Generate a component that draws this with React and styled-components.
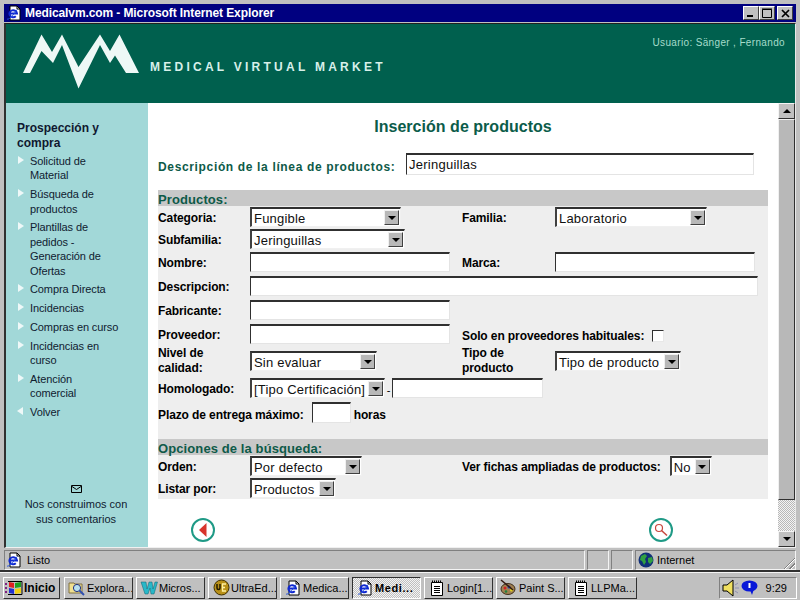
import styled, { createGlobalStyle } from "styled-components";

const GlobalStyle = createGlobalStyle`
  html, body {
    margin: 0;
    padding: 0;
    background: #c0c0c0;
  }
  * {
    box-sizing: border-box;
  }
`;

const menuItems = [
  { text: ["Solicitud de", "Material"] },
  { text: ["Búsqueda de", "productos"] },
  { text: ["Plantillas de", "pedidos -", "Generación de", "Ofertas"] },
  { text: ["Compra Directa"] },
  { text: ["Incidencias"] },
  { text: ["Compras en curso"] },
  { text: ["Incidencias en", "curso"] },
  { text: ["Atención", "comercial"] },
  { text: ["Volver"], back: true },
];

function IeIcon({ size = 16 }) {
  return (
    <svg width={size} height={size} viewBox="0 0 16 16">
      <path d="M4 1h7l3 3v11H4z" fill="#fff" stroke="#000" />
      <path d="M11 1v3h3" fill="none" stroke="#000" />
      <path d="M3.5 8.500h7.500a3.800 3.500 0 1 0-1.200 2.800" fill="none" stroke="#1028d0" strokeWidth="2" />
      <path d="M1 14c1.500 1 6-3 10-9.500" fill="none" stroke="#2050e0" strokeWidth="1" />
    </svg>
  );
}

function NotepadIcon() {
  return (
    <svg width="16" height="16" viewBox="0 0 16 16">
      <path d="M2.500 2.500h11v13h-11z" fill="#fff" stroke="#000" />
      <path d="M3 1.500h10" stroke="#000" strokeDasharray="1 1" strokeWidth="2" />
      <path d="M5 6.500h6M5 8.500h6M5 10.500h6M5 12.500h6" stroke="#000" />
    </svg>
  );
}

function FolderIcon() {
  return (
    <svg width="18" height="16" viewBox="0 0 18 16">
      <path d="M1 3h5l1 1h7v9H1z" fill="#f0e090" stroke="#807040" />
      <circle cx="9" cy="8" r="3.600" fill="#b8e0f0" stroke="#203080" />
      <path d="M11.500 10.500L16 15" stroke="#3050b0" strokeWidth="2" />
    </svg>
  );
}

function WordIcon() {
  return (
    <svg width="18" height="16" viewBox="0 0 18 16">
      <path
        d="M1 2h5l1 7 2-7h3l1 7 2-7h2.500l-3.500 12h-3l-1-6-2 6H5z"
        fill="#28b8c8"
        stroke="#106070"
        strokeWidth=".5"
      />
    </svg>
  );
}

function UltraIcon() {
  return (
    <svg width="17" height="17" viewBox="0 0 17 17">
      <circle cx="8.500" cy="8.500" r="7.500" fill="#b89018" stroke="#403000" />
      <path d="M4 5v4c0 2 3 2 3 0V5" fill="none" stroke="#201800" strokeWidth="1.500" />
      <path d="M13 5h-3.500v7H13M9.500 8.500H12" fill="none" stroke="#fff0a0" strokeWidth="1.300" />
    </svg>
  );
}

function PaintIcon() {
  return (
    <svg width="18" height="17" viewBox="0 0 18 17">
      <ellipse cx="8" cy="10" rx="7" ry="5.500" fill="#a08050" stroke="#403020" />
      <circle cx="5" cy="9" r="1.500" fill="#d02020" />
      <circle cx="9" cy="8" r="1.500" fill="#2040c0" />
      <circle cx="11.500" cy="11" r="1.500" fill="#e0d020" />
      <circle cx="6" cy="12.500" r="1.300" fill="#208040" />
      <path d="M1 1l12 10" stroke="#301810" strokeWidth="1.500" />
    </svg>
  );
}

function StartIcon() {
  return (
    <svg width="19" height="16" viewBox="0 0 19 16">
      <path d="M0 3h2v2H0zM0 7h2v2H0zM0 11h2v2H0z" fill="#802080" />
      <path d="M4 2l5 1v5L4 7z" fill="#e02020" />
      <path d="M10 3l6-1v5l-6 1z" fill="#20a020" />
      <path d="M4 8l5 1v5l-5-1z" fill="#2030d0" />
      <path d="M10 9l6-1v5l-6 1z" fill="#f0d010" />
      <path d="M3 1.500h14v13H3" fill="none" stroke="#000" />
    </svg>
  );
}

function GlobeIcon() {
  return (
    <svg width="16" height="16" viewBox="0 0 16 16">
      <circle cx="8" cy="8" r="7.500" fill="#103078" />
      <path d="M3 4l4-2 2 2-2 3 1 3-2 3-2-4-2-1zM10 6l4-1 1 4-3 3-2-2z" fill="#30a040" />
    </svg>
  );
}

function SpeakerIcon() {
  return (
    <svg width="18" height="18" viewBox="0 0 18 18">
      <path d="M1 6h4l6-5v16l-6-5H1z" fill="#f0e060" stroke="#000" />
      <path d="M13 6l3-2M13 9h4M13 12l3 2" stroke="#9090b0" />
    </svg>
  );
}

function BubbleIcon() {
  return (
    <svg width="17" height="15" viewBox="0 0 17 15">
      <ellipse cx="8.500" cy="6" rx="8" ry="5.500" fill="#0818d8" />
      <path d="M9 10l2 5 2-6z" fill="#0818d8" />
      <path d="M8.500 3v5" stroke="#fff" strokeWidth="2" />
    </svg>
  );
}

function MailIcon() {
  return (
    <svg width="11" height="8" viewBox="0 0 11 8">
      <path d="M.5.500h10v7H.5z" fill="#a2d8d8" stroke="#000" />
      <path d="M1 1.500l4.500 3 4.500-3" fill="none" stroke="#000" />
    </svg>
  );
}

function MarketLogo() {
  return (
    <svg width="118" height="56" viewBox="0 0 118 56">
      <path
        d="M0 39L18.500 .5 29 18 39 .5 55.500 33 77 .5 87 17 96.500.5 116 39h-13L92 21.500 87 29 77 11 55.500 54.500 39 11 30 29 18.500 17 7 39z"
        fill="#eef8f6"
      />
    </svg>
  );
}

function SelectField({ width, children }) {
  return (
    <SelectBox $width={width}>
      <span>{children}</span>
      <ArrowButton>
        <DownArrow />
      </ArrowButton>
    </SelectBox>
  );
}

export default function App() {
  return (
    <Screen>
      <GlobalStyle />
      <Window>
        <TitleBar>
          <IeIcon />
          <TitleText>Medicalvm.com - Microsoft Internet Explorer</TitleText>
          <WindowButtons>
            <WindowButton>
              <svg width="8" height="8" viewBox="0 0 8 8">
                <path d="M0 6h6v2H0z" fill="#000" />
              </svg>
            </WindowButton>
            <WindowButton>
              <svg width="10" height="10" viewBox="0 0 10 10">
                <path d="M.5 1.500h9v8h-9zM0 1h10" fill="none" stroke="#000" />
              </svg>
            </WindowButton>
            <CloseButton>
              <svg width="9" height="9" viewBox="0 0 9 9">
                <path d="M1 1l7 7M8 1L1 8" stroke="#000" strokeWidth="1.700" />
              </svg>
            </CloseButton>
          </WindowButtons>
        </TitleBar>

        <Frame>
          <Header>
            <Brand>
              <MarketLogo />
              <BrandName>MEDICAL VIRTUAL MARKET</BrandName>
            </Brand>
            <UserName>Usuario: Sänger , Fernando</UserName>
          </Header>

          <Body>
            <Sidebar>
              <SideTitle>Prospección y compra</SideTitle>
              <Menu>
                {menuItems.map((item) => (
                  <MenuItem key={item.text[0] + item.text.length}>
                    <Bullet $back={item.back} />
                    <span>
                      {item.text.map((line) => (
                        <MenuLine key={line}>{line}</MenuLine>
                      ))}
                    </span>
                  </MenuItem>
                ))}
              </Menu>
              <Feedback>
                <MailIcon />
                <p>Nos construimos con sus comentarios</p>
              </Feedback>
            </Sidebar>

            <Main>
              <PageTitle>Inserción de productos</PageTitle>
              <DescriptionRow>
                <GreenLabel>Descripción de la línea de productos:</GreenLabel>
                <TextField $width={348} $height={22} defaultValue="Jeringuillas" />
              </DescriptionRow>

              <FormPanel>
                <SectionBar>Productos:</SectionBar>
                <Row $h={22}>
                  <Label>Categoria:</Label>
                  <SelectField width={151}>Fungible</SelectField>
                  <Label>Familia:</Label>
                  <SelectField width={152}>Laboratorio</SelectField>
                </Row>
                <Row $h={22}>
                  <Label>Subfamilia:</Label>
                  <SelectField width={155}>Jeringuillas</SelectField>
                </Row>
                <Row $h={24}>
                  <Label>Nombre:</Label>
                  <TextField $width={200} />
                  <Label>Marca:</Label>
                  <TextField $width={200} />
                </Row>
                <Row $h={24}>
                  <Label>Descripcion:</Label>
                  <WideCell>
                    <TextField $width={508} />
                  </WideCell>
                </Row>
                <Row $h={24}>
                  <Label>Fabricante:</Label>
                  <TextField $width={200} />
                </Row>
                <Row $h={24}>
                  <Label>Proveedor:</Label>
                  <TextField $width={200} />
                  <CheckCell>
                    <Label>Solo en proveedores habituales:</Label>
                    <CheckBox />
                  </CheckCell>
                </Row>
                <Row $h={30}>
                  <TallLabel>Nivel de calidad:</TallLabel>
                  <SelectField width={127}>Sin evaluar</SelectField>
                  <TallLabel>Tipo de producto</TallLabel>
                  <SelectField width={126}>Tipo de producto</SelectField>
                </Row>
                <Row $h={24}>
                  <Label>Homologado:</Label>
                  <InlineCell>
                    <SelectField width={135}>[Tipo Certificación]</SelectField>
                    <Dash>-</Dash>
                    <TextField $width={151} />
                  </InlineCell>
                </Row>
                <Row $h={25}>
                  <TermCell>
                    <TermLabel>Plazo de entrega máximo:</TermLabel>
                    <TextField $width={39} $height={21} />
                    <TermLabel>horas</TermLabel>
                  </TermCell>
                </Row>
                <PanelGap />
                <SectionBar>Opciones de la búsqueda:</SectionBar>
                <Row $h={22}>
                  <Label>Orden:</Label>
                  <SelectField width={112}>Por defecto</SelectField>
                  <FichasCell>
                    <Label>Ver fichas ampliadas de productos:</Label>
                    <SelectField width={42}>No</SelectField>
                  </FichasCell>
                </Row>
                <Row $h={22}>
                  <Label>Listar por:</Label>
                  <SelectField width={86}>Productos</SelectField>
                </Row>
              </FormPanel>

              <ActionRow>
                <RoundButton>
                  <svg width="8" height="14" viewBox="0 0 8 14">
                    <path d="M7.500 0v14L0 7z" fill="#d8342c" />
                  </svg>
                </RoundButton>
                <RoundButton>
                  <svg width="14" height="14" viewBox="0 0 14 14">
                    <circle cx="5" cy="5" r="3.500" fill="none" stroke="#c8453c" strokeWidth="1.200" />
                    <path d="M7.500 7.500L13 12.500" stroke="#c8453c" strokeWidth="1.500" />
                  </svg>
                </RoundButton>
              </ActionRow>
            </Main>

            <ScrollBar>
              <ScrollButton>
                <UpArrow />
              </ScrollButton>
              <ScrollThumb />
              <ScrollTrack />
              <ScrollButton>
                <DownArrow />
              </ScrollButton>
            </ScrollBar>
          </Body>
        </Frame>

        <StatusBar>
          <StatusMain>
            <IeIcon />
            <span>Listo</span>
          </StatusMain>
          <StatusSmall />
          <StatusSmall />
          <StatusZone>
            <GlobeIcon />
            <span>Internet</span>
            <Grip />
          </StatusZone>
        </StatusBar>
      </Window>

      <Taskbar>
        <StartButton>
          <StartIcon />
          Inicio
        </StartButton>
        <TaskList>
          <TaskButton>
            <TaskIcon><FolderIcon /></TaskIcon>
            Explora...
          </TaskButton>
          <TaskButton>
            <TaskIcon><WordIcon /></TaskIcon>
            Micros...
          </TaskButton>
          <TaskButton>
            <TaskIcon><UltraIcon /></TaskIcon>
            UltraEd...
          </TaskButton>
          <TaskButton>
            <TaskIcon><IeIcon /></TaskIcon>
            Medica...
          </TaskButton>
          <TaskButton $active>
            <TaskIcon><IeIcon /></TaskIcon>
            Medi...
          </TaskButton>
          <TaskButton>
            <TaskIcon><NotepadIcon /></TaskIcon>
            Login[1...
          </TaskButton>
          <TaskButton>
            <TaskIcon><PaintIcon /></TaskIcon>
            Paint S...
          </TaskButton>
          <TaskButton>
            <TaskIcon><NotepadIcon /></TaskIcon>
            LLPMa...
          </TaskButton>
        </TaskList>
        <Tray>
          <SpeakerIcon />
          <BubbleIcon />
          <Clock>9:29</Clock>
        </Tray>
      </Taskbar>
    </Screen>
  );
}

const Screen = styled.div`
  width: 800px;
  height: 600px;
  overflow: hidden;
  display: flex;
  flex-direction: column;
  background: #c0c0c0;
  font-family: "Liberation Sans", Arial, sans-serif;
  color: #000;
`;

const Window = styled.div`
  height: 572px;
  padding: 4px 4px 0;
  display: flex;
  flex-direction: column;
  border-bottom: 2px solid #303030;
`;

const TitleBar = styled.div`
  height: 18px;
  flex-shrink: 0;
  display: flex;
  align-items: center;
  gap: 3px;
  padding-left: 2px;
  padding-right: 3px;
  background: #000080;
`;

const TitleText = styled.span`
  color: #fff;
  font-size: 12px;
  font-weight: bold;
  letter-spacing: -0.1px;
`;

const WindowButtons = styled.div`
  margin-left: auto;
  display: flex;
  align-items: center;
`;

const WindowButton = styled.div`
  width: 16px;
  height: 14px;
  display: flex;
  align-items: center;
  justify-content: center;
  background: #c0c0c0;
  border: 1px solid;
  border-color: #fff #404040 #404040 #fff;
`;

const CloseButton = styled(WindowButton)`
  margin-left: 2px;
`;

const Frame = styled.div`
  height: 525px;
  margin-top: 1px;
  display: flex;
  flex-direction: column;
  border-top: 1px solid #202020;
  border-left: 2px solid #303030;
  border-right: 1px solid #e8e8e8;
  border-bottom: 1px solid #f0f0f0;
`;

const Header = styled.header`
  height: 79px;
  flex-shrink: 0;
  display: flex;
  justify-content: space-between;
  background: #00604e;
`;

const Brand = styled.div`
  display: flex;
  align-items: flex-end;
  gap: 9px;
  padding: 9px 0 0 17px;
  height: 66px;
`;

const BrandName = styled.span`
  color: #d8f0ea;
  font-size: 12px;
  font-weight: bold;
  letter-spacing: 3.25px;
  line-height: 14px;
  margin-bottom: 16px;
`;

const UserName = styled.span`
  margin: 12px 10px 0 0;
  color: #a6dccb;
  font-size: 10px;
  letter-spacing: 0.35px;
  line-height: 13px;
`;

const Body = styled.div`
  flex: 1;
  min-height: 0;
  display: flex;
`;

const Sidebar = styled.aside`
  width: 142px;
  flex-shrink: 0;
  display: flex;
  flex-direction: column;
  padding: 18px 6px 20px 11px;
  background: #a2d8d8;
`;

const SideTitle = styled.h2`
  margin: 0;
  width: 84px;
  font-size: 12px;
  font-weight: bold;
  line-height: 15px;
  color: #101830;
`;

const Menu = styled.ul`
  margin: 3px 0 0;
  padding: 0;
  list-style: none;
  display: flex;
  flex-direction: column;
  gap: 4.4px;
`;

const MenuItem = styled.li`
  display: flex;
  gap: 6px;
  font-size: 11px;
  line-height: 14.4px;
  letter-spacing: -0.1px;
  color: #102030;
`;

const MenuLine = styled.span`
  display: block;
  white-space: nowrap;
`;

const Bullet = styled.i`
  width: 0;
  height: 0;
  margin: 2px 0 0 ${(p) => (p.$back ? "0" : "1px")};
  margin-right: ${(p) => (p.$back ? "1px" : "0")};
  border-top: 4.500px solid transparent;
  border-bottom: 4.500px solid transparent;
  border-left: ${(p) => (p.$back ? "0" : "6px solid #eef8f8")};
  border-right: ${(p) => (p.$back ? "6px solid #eef8f8" : "0")};
`;

const Feedback = styled.div`
  margin-top: auto;
  margin-left: -7px;
  display: flex;
  flex-direction: column;
  align-items: center;
  gap: 4px;
  font-size: 11px;
  line-height: 15px;
  color: #102030;
  text-align: center;

  p {
    margin: 0;
    width: 116px;
  }
`;

const Main = styled.main`
  flex: 1;
  min-width: 0;
  display: flex;
  flex-direction: column;
  padding: 14px 10px 0;
  background: #fff;
`;

const PageTitle = styled.h1`
  margin: 0;
  text-align: center;
  color: #0b5c4a;
  font-size: 16px;
  font-weight: bold;
  line-height: 20px;
  letter-spacing: 0.03px;
`;

const DescriptionRow = styled.div`
  height: 22px;
  margin-top: 16px;
  display: flex;
  align-items: center;
  justify-content: space-between;
  padding-right: 14px;
`;

const GreenLabel = styled.span`
  color: #0e5a48;
  font-size: 12px;
  font-weight: bold;
  letter-spacing: 0.65px;
  padding-top: 5px;
`;

const TextField = styled.input.attrs({ type: "text" })`
  width: ${(p) => p.$width}px;
  height: ${(p) => p.$height || 20}px;
  padding: 0 0 0 2px;
  background: #fff;
  border-width: 2px 1px 1px 1px;
  border-style: solid;
  border-color: #303030 #e4e4e4 #e4e4e4 #303030;
  border-radius: 0;
  outline: none;
  color: #101010;
  font-family: "Liberation Sans", Arial, sans-serif;
  font-size: 13px;
  letter-spacing: 0.25px;
`;

const FormPanel = styled.section`
  margin-top: 15px;
  background: #eeeeee;
`;

const SectionBar = styled.h3`
  margin: 0;
  height: 16px;
  background: #c8c8c8;
  color: #0e5a48;
  font-size: 13px;
  font-weight: bold;
  line-height: 19px;
  letter-spacing: 0.1px;
`;

const Row = styled.div`
  height: ${(p) => p.$h}px;
  display: grid;
  grid-template-columns: 92px 212px 93px 1fr;
  align-items: center;
`;

const Label = styled.span`
  padding-top: 2px;
  font-size: 12px;
  font-weight: bold;
  line-height: 15px;
  letter-spacing: -0.1px;
`;

const TallLabel = styled(Label)`
  padding-top: 0;
`;

const TermLabel = styled(Label)`
  padding-top: 6px;

  &:first-child {
    margin-right: 5px;
  }
`;

const WideCell = styled.div`
  grid-column: 2 / -1;
`;

const InlineCell = styled.div`
  grid-column: 2 / -1;
  display: flex;
  align-items: center;
`;

const Dash = styled.span`
  width: 7px;
  text-align: center;
  font-size: 11px;
  line-height: 1;
  padding-top: 4px;
`;

const CheckCell = styled.div`
  grid-column: 3 / -1;
  display: flex;
  align-items: center;
  gap: 8px;
  padding-top: 3px;
`;

const FichasCell = styled.div`
  grid-column: 3 / -1;
  display: flex;
  align-items: center;
  gap: 9px;
`;

const TermCell = styled.div`
  grid-column: 1 / -1;
  display: flex;
  align-items: center;
  gap: 3px;
`;

const CheckBox = styled.i`
  width: 12px;
  height: 12px;
  background: #fff;
  border: 1px solid;
  border-color: #303030 #e8e8e8 #e8e8e8 #303030;
`;

const PanelGap = styled.div`
  height: 14px;
`;

const SelectBox = styled.div`
  width: ${(p) => p.$width}px;
  height: 20px;
  display: flex;
  align-items: center;
  justify-content: space-between;
  padding: 0 1px 0 2px;
  background: #fff;
  border-width: 2px 1px 1px 2px;
  border-style: solid;
  border-color: #303030 #f0f0f0 #f0f0f0 #404040;
  color: #101010;
  font-size: 13px;
  letter-spacing: 0.2px;
  white-space: nowrap;

  span {
    padding-top: 2px;
  }
`;

const ArrowButton = styled.div`
  width: 15px;
  height: 15px;
  flex-shrink: 0;
  display: flex;
  align-items: center;
  justify-content: center;
  background: #b8b8b8;
  border: 1px solid;
  border-color: #f0f0f0 #404040 #404040 #f0f0f0;
`;

const DownArrow = styled.i`
  width: 0;
  height: 0;
  border-left: 4px solid transparent;
  border-right: 4px solid transparent;
  border-top: 4px solid #000;
`;

const UpArrow = styled.i`
  width: 0;
  height: 0;
  border-left: 4px solid transparent;
  border-right: 4px solid transparent;
  border-bottom: 4px solid #000;
`;

const ActionRow = styled.div`
  flex: 1;
  display: flex;
  align-items: center;
  justify-content: space-between;
  padding: 13px 95px 0 33px;
`;

const RoundButton = styled.div`
  width: 24px;
  height: 24px;
  display: flex;
  align-items: center;
  justify-content: center;
  border: 2px solid #1f9a86;
  border-radius: 50%;
  background: #fff;
`;

const ScrollBar = styled.div`
  width: 17px;
  flex-shrink: 0;
  display: flex;
  flex-direction: column;
  background: #c0c0c0;
`;

const ScrollButton = styled.div`
  height: 16px;
  flex-shrink: 0;
  display: flex;
  align-items: center;
  justify-content: center;
  background: #c0c0c0;
  border: 1px solid;
  border-color: #f4f4f4 #303030 #303030 #f4f4f4;
`;

const ScrollThumb = styled.div`
  height: 381px;
  flex-shrink: 0;
  background: #b8b8b8;
  border: 1px solid;
  border-color: #f0f0f0 #303030 #303030 #f0f0f0;
`;

const ScrollTrack = styled.div`
  flex: 1;
  background: repeating-conic-gradient(#f4f4f4 0 25%, #b8b8b8 0 50%) 0 0 / 2px 2px;
`;

const StatusBar = styled.footer`
  height: 20px;
  margin-top: 2px;
  display: flex;
  gap: 2px;
  font-size: 11px;
`;

const StatusMain = styled.div`
  width: 581px;
  display: flex;
  align-items: center;
  gap: 5px;
  padding-left: 1px;
  border: 1px solid;
  border-color: #808080 #f4f4f4 #f4f4f4 #808080;
`;

const StatusSmall = styled.div`
  width: 22px;
  border: 1px solid;
  border-color: #808080 #f4f4f4 #f4f4f4 #808080;
`;

const StatusZone = styled.div`
  flex: 1;
  display: flex;
  align-items: center;
  gap: 3px;
  padding-left: 2px;
  position: relative;
  border: 1px solid;
  border-color: #808080 #f4f4f4 #f4f4f4 #808080;
`;

const Grip = styled.i`
  position: absolute;
  right: 0;
  bottom: 0;
  width: 13px;
  height: 13px;
  background: repeating-linear-gradient(135deg, #c0c0c0 0 2px, #808080 2px 3px, #fff 3px 4px);
  clip-path: polygon(100% 0, 100% 100%, 0 100%);
`;

const Taskbar = styled.nav`
  flex: 1;
  display: flex;
  align-items: center;
  padding: 2px 3px 0;
  border-top: 1px solid #f4f4f4;
  font-size: 11px;
`;

const StartButton = styled.div`
  width: 57px;
  height: 22px;
  flex-shrink: 0;
  display: flex;
  align-items: center;
  padding-left: 1px;
  font-size: 12px;
  font-weight: bold;
  border: 1px solid;
  border-color: #fff #303030 #303030 #fff;
`;

const TaskList = styled.div`
  display: flex;
  gap: 3px;
  margin-left: 4px;
`;

const TaskButton = styled.div`
  width: 69px;
  height: 22px;
  display: flex;
  align-items: center;
  gap: 1px;
  padding-left: 3px;
  white-space: nowrap;
  overflow: hidden;
  font-weight: ${(p) => (p.$active ? "bold" : "normal")};
  letter-spacing: ${(p) => (p.$active ? "0.6px" : "0")};
  background: ${(p) =>
    p.$active
      ? "repeating-conic-gradient(#f4f4f4 0 25%, #c0c0c0 0 50%) 0 0 / 2px 2px"
      : "#c0c0c0"};
  border: 1px solid;
  border-color: ${(p) =>
    p.$active ? "#303030 #fff #fff #303030" : "#fff #303030 #303030 #fff"};
`;

const TaskIcon = styled.span`
  width: 18px;
  flex-shrink: 0;
  display: flex;
  align-items: center;
  justify-content: center;
`;

const Tray = styled.div`
  margin-left: auto;
  width: 78px;
  height: 22px;
  display: flex;
  align-items: center;
  gap: 1px;
  padding-left: 2px;
  border: 1px solid;
  border-color: #808080 #fff #fff #808080;
`;

const Clock = styled.span`
  margin-left: auto;
  margin-right: 9px;
`;
